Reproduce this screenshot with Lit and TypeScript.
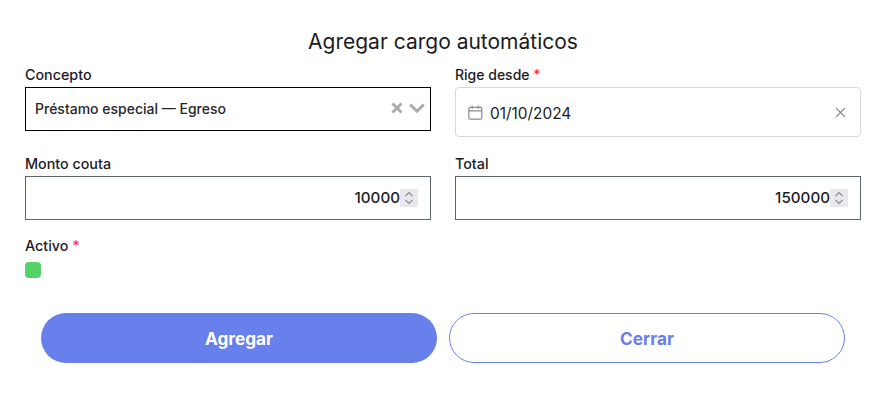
import { LitElement, html, css } from "lit";
import { customElement } from "lit/decorators.js";

@customElement("app-root")
export class AppRoot extends LitElement {
  static styles = css`
    :host { display: block; width: 885px; height: 400px; background: #fff; font-family: Inter, "Liberation Sans", sans-serif; color: #1b1b1f; overflow: hidden; }
    .form { display: flex; flex-direction: column; padding: 28px 24px 0 25px; }
    h2 { margin: 0 0 11px; height: 27px; line-height: 27px; font-size: 21px; font-weight: 400; text-align: center; }
    .grid { display: grid; grid-template-columns: 406px 406px; column-gap: 24px; row-gap: 18px; }
    .field { display: flex; flex-direction: column; align-items: stretch; }
    label { height: 21px; line-height: 18px; font-size: 14.3px; font-weight: 500; }
    .tight { font-size: 14px; }
    .req { color: #f5325c; }
    .box { box-sizing: border-box; height: 44px; display: flex; align-items: center; }
    .select { border: 1px solid #000; padding: 0 5px 2px 9px; font-size: 14px; font-weight: 500; color: #26262b; justify-content: space-between; }
    .select .icons { display: flex; align-items: center; gap: 6px; padding-top: 2px; margin-top: -2px; }
    .date { height: 50px; border: 1px solid #d9d9dd; border-radius: 4px; padding: 0 14px 0 12px; font-size: 15.4px; gap: 7px; }
    .date .val { flex: 1; padding-top: 2px; }
    .number { border: 1px solid #5c6670; justify-content: flex-end; padding-right: 12px; font-size: 15.2px; font-weight: 500; }
    .number .num { padding-bottom: 1px; }
    .spin { width: 18px; height: 18px; background: #e9e9ed; display: flex; align-items: center; justify-content: center; }
    .check { width: 16px; height: 16px; border-radius: 4px; background: #55d169; margin-top: 4px; }
    .active { margin-top: 17px; }
    .actions { display: flex; gap: 12px; margin: 35px 0 0 16px; }
    button { box-sizing: border-box; width: 396px; height: 50px; border-radius: 25px; font: 700 17.2px Inter, "Liberation Sans", sans-serif; }
    .primary { background: #6780ec; border: none; color: #fff; }
    .secondary { background: #fff; border: 1px solid #6780ec; color: #6780ec; }
    svg { display: block; }
  `;

  private spin() {
    return html`<span class="spin"><svg width="10" height="16" viewBox="0 0 10 16" fill="none" stroke="#8a8a90" stroke-width="1.1"><path d="M1.5 6 5 2.5 8.5 6"/><path d="M1.5 10 5 13.5 8.5 10"/></svg></span>`;
  }

  render() {
    return html`
      <div class="form">
        <h2>Agregar cargo automáticos</h2>
        <div class="grid">
          <div class="field">
            <label>Concepto</label>
            <div class="box select">
              <span>Préstamo especial — Egreso</span>
              <span class="icons">
                <svg width="12" height="12" viewBox="0 0 12 12" fill="none" stroke="#aaa" stroke-width="2.8"><path d="M1.5 1.5l9 9M10.5 1.5l-9 9"/></svg>
                <svg width="16" height="12" viewBox="0 0 16 12" fill="none" stroke="#aaa" stroke-width="3"><path d="M1.2 2.5 8 9.2l6.8-6.7"/></svg>
              </span>
            </div>
          </div>
          <div class="field">
            <label class="tight">Rige desde <span class="req">*</span></label>
            <div class="box date">
              <svg width="15" height="15" viewBox="0 0 15 15" fill="none" stroke="#8c8c8c" stroke-width="1.2"><rect x="0.8" y="2.4" width="13" height="11.8" rx="1.4"/><path d="M0.8 5.8h13M4.2.6v3.2M10.4.6v3.2"/></svg>
              <span class="val">01/10/2024</span>
              <svg width="11" height="11" viewBox="0 0 11 11" fill="none" stroke="#8c8c8c" stroke-width="1.1"><path d="M1 1l9 9M10 1l-9 9"/></svg>
            </div>
          </div>
          <div class="field">
            <label>Monto couta</label>
            <div class="box number"><span class="num">10000</span>${this.spin()}</div>
          </div>
          <div class="field">
            <label>Total</label>
            <div class="box number"><span class="num">150000</span>${this.spin()}</div>
          </div>
        </div>
        <div class="field active">
          <label>Activo <span class="req">*</span></label>
          <div class="check"></div>
        </div>
        <div class="actions">
          <button class="primary">Agregar</button>
          <button class="secondary">Cerrar</button>
        </div>
      </div>
    `;
  }
}
